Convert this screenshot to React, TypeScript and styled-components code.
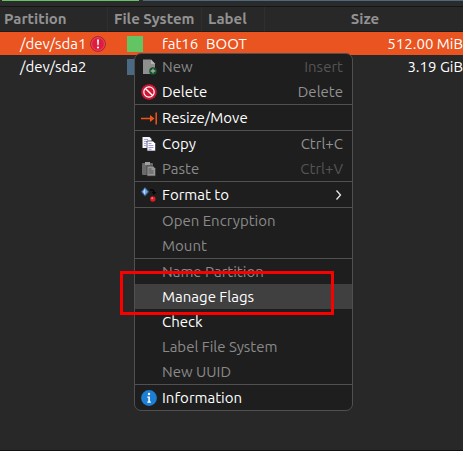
import React from "react";
import styled, { createGlobalStyle, css } from "styled-components";

const GlobalStyle = createGlobalStyle`
  * { box-sizing: border-box; }
  body {
    margin: 0;
    background: #282828;
    color: #fff;
    font: 15px/22px Ubuntu, "Noto Sans", "Open Sans", sans-serif;
  }
`;

const Window = styled.main`
  position: relative;
  display: flex;
  flex-direction: column;
  min-height: 100vh;
  overflow: hidden;
  border-bottom: 1px solid #151113;
`;

const DiskBar = styled.div`
  display: flex;
  gap: 4px;
  height: 7px;
  padding-left: 2px;
  background: #2b2b2b;
  border-bottom: 1px solid #161616;
`;

const DiskSegment = styled.div<{ $color: string; $grow?: boolean }>`
  flex: ${(p) => (p.$grow ? "1" : "0 0 137px")};
  height: 1px;
  background: ${(p) => p.$color};
`;

const Table = styled.table`
  width: 100%;
  table-layout: fixed;
  border-collapse: separate;
  border-spacing: 0;
`;

const Col = styled.col<{ $width?: number }>`
  width: ${(p) => (p.$width ? `${p.$width}px` : "auto")};
`;

const HeadCell = styled.th<{ $center?: boolean }>`
  height: 25px;
  padding: 0 0 0 ${(p) => (p.$center ? 2 : 6)}px;
  border-right: 1px solid #2f2f2f;
  border-bottom: 1px solid #1d1d1d;
  color: #929292;
  font-weight: 700;
  line-height: 24px;
  text-align: ${(p) => (p.$center ? "center" : "left")};
  white-space: nowrap;
  &:first-child { padding-left: 4px; }
  &:last-child { border-right: 0; }
`;

const Row = styled.tr<{ $selected?: boolean }>`
  background: ${(p) => (p.$selected ? "#e95420" : "transparent")};
`;

const Cell = styled.td<{ $indent?: number; $right?: boolean }>`
  height: 23px;
  padding: 0 0 0 ${(p) => p.$indent ?? 0}px;
  text-align: ${(p) => (p.$right ? "right" : "left")};
  white-space: nowrap;
`;

const CellContent = styled.div<{ $gap: number }>`
  display: flex;
  align-items: center;
  gap: ${(p) => p.$gap}px;
  svg { flex: none; }
`;

const Swatch = styled.span<{ $color: string }>`
  width: 16px;
  height: 16px;
  background: ${(p) => p.$color};
`;

const Menu = styled.div`
  position: absolute;
  top: 53px;
  left: 134px;
  width: 219px;
  overflow: hidden;
  background: #1e1e1e;
  border: 1px solid #505050;
  border-radius: 7px;
`;

const Separator = styled.hr`
  height: 1px;
  margin: 0;
  border: 0;
  background: #505050;
`;

const MenuItem = styled.button<{ $active?: boolean }>`
  display: grid;
  grid-template-columns: 16px 1fr auto;
  align-items: center;
  column-gap: 5px;
  width: 100%;
  height: 25px;
  padding: 0 9px 0 6px;
  border: 0;
  background: ${(p) => (p.$active ? "#404040" : "transparent")};
  color: #fff;
  font: inherit;
  text-align: left;
  white-space: nowrap;
  ${(p) => p.disabled && css`color: #8a8a8a;`}
`;

const Shortcut = styled.kbd<{ $dim?: boolean }>`
  color: ${(p) => (p.$dim ? "#555" : "#929292")};
  font: inherit;
`;

const Callout = styled.div`
  position: absolute;
  top: 271px;
  left: 120px;
  width: 214px;
  height: 44px;
  border: 3px solid #fb0000;
  pointer-events: none;
`;

const Icon = ({ children }: { children?: React.ReactNode }) => (
  <svg width="16" height="16" viewBox="0 0 16 16" aria-hidden="true">{children}</svg>
);

const WarningIcon = () => (
  <Icon>
    <circle cx="8" cy="8" r="7.4" fill="#df1c3f" stroke="#a02a30" strokeWidth="1" />
    <circle cx="8" cy="8" r="6.4" fill="none" stroke="#ee5468" strokeWidth=".8" />
    <path d="M7 3.5h2l-.4 5.7H7.4z" fill="#fff" />
    <circle cx="8" cy="11.5" r="1.1" fill="#fff" />
  </Icon>
);

const NewIcon = () => (
  <Icon>
    <path d="M2 .5h8l4 4V15H2z" fill="#8f8f8f" />
    <path d="M10 .5V5h4z" fill="#b5b5b5" />
    <circle cx="12" cy="12" r="3.8" fill="#17562a" />
    <path d="M12 9.7v4.6M9.7 12h4.6" stroke="#a3aaa4" strokeWidth="1.3" />
  </Icon>
);

const DeleteIcon = () => (
  <Icon>
    <circle cx="8" cy="8" r="7.8" fill="#cf1735" />
    <circle cx="8" cy="8" r="5.2" fill="none" stroke="#fff" strokeWidth="1.2" />
    <path d="M4.4 4.4l7.2 7.2" stroke="#fff" strokeWidth="1.4" />
  </Icon>
);

const ResizeIcon = () => (
  <Icon>
    <path d="M0 8.5h11M15.2 2.5v12" stroke="#f2541b" strokeWidth="1.5" />
    <path d="M9 5L13.5 8.5 9 12z" fill="#f2541b" />
  </Icon>
);

const CopyIcon = () => (
  <Icon>
    <path d="M1.5 1h7l2 2v9h-9z" fill="#f5f5fa" />
    <path d="M3 3.5h4M3 5.5h3M3 7.5h2M3 9.5h2" stroke="#aaa8e4" />
    <path d="M6 5h6l2.5 2.5V15H6z" fill="#fff" stroke="#292933" strokeWidth=".7" />
    <path d="M7.5 7.5h3M7.5 9.5h5M7.5 11.5h5M7.5 13.3h3" stroke="#9c9ae0" />
  </Icon>
);

const PasteIcon = () => (
  <Icon>
    <rect x="1" y="2" width="11" height="12" rx="1" fill="#6b6b6b" />
    <path d="M4 1h5v3H4z" fill="#a0a0a0" />
    <path d="M6 5h6l2.5 2.5V15H6z" fill="#969696" stroke="#373737" strokeWidth=".7" />
    <path d="M7.5 8h3M7.5 10h5M7.5 12h5" stroke="#55545f" />
  </Icon>
);

const FormatIcon = () => (
  <Icon>
    <path d="M4 0L8 4.7 4 9.5 0 4.7z" fill="#35659f" />
    <path d="M4 1.3L6.8 4.7 4 8.1 1.2 4.7z" fill="#76a3d8" />
    <path d="M4 1.3V8.1L2.2 4.7z" fill="#c2d9f2" />
    <path d="M9 3q4-1 4 3" fill="none" stroke="#050505" strokeWidth="1.5" />
    <path d="M10.5 5h5L13 8z" fill="#050505" />
    <circle cx="11.8" cy="12" r="2.7" fill="#d91e25" />
    <circle cx="11.2" cy="11.2" r="1" fill="#ff827d" />
  </Icon>
);

const InfoIcon = () => (
  <Icon>
    <circle cx="8" cy="8" r="7.9" fill="#1c7fd5" />
    <circle cx="8" cy="4" r="1.2" fill="#fff" />
    <path d="M6.3 6.5h2.6v5h1v1.2H6.3v-1.2h1V7.7h-1z" fill="#fff" />
  </Icon>
);

const Chevron = () => (
  <Icon>
    <path d="M9.5 3.5l4 4.5-4 4.5" fill="none" stroke="#e8e8e8" strokeWidth="1.3" />
  </Icon>
);

type Entry = {
  label: string;
  icon?: React.ReactNode;
  shortcut?: string;
  disabled?: boolean;
  active?: boolean;
  submenu?: boolean;
};

const groups: Entry[][] = [
  [
    { label: "New", icon: <NewIcon />, shortcut: "Insert", disabled: true },
    { label: "Delete", icon: <DeleteIcon />, shortcut: "Delete" },
  ],
  [{ label: "Resize/Move", icon: <ResizeIcon /> }],
  [
    { label: "Copy", icon: <CopyIcon />, shortcut: "Ctrl+C" },
    { label: "Paste", icon: <PasteIcon />, shortcut: "Ctrl+V", disabled: true },
  ],
  [{ label: "Format to", icon: <FormatIcon />, submenu: true }],
  [
    { label: "Open Encryption", disabled: true },
    { label: "Mount", disabled: true },
  ],
  [
    { label: "Name Partition", disabled: true },
    { label: "Manage Flags", active: true },
    { label: "Check" },
    { label: "Label File System", disabled: true },
    { label: "New UUID", disabled: true },
  ],
  [{ label: "Information", icon: <InfoIcon /> }],
];

export default function App() {
  return (
    <Window>
      <GlobalStyle />
      <DiskBar>
        <DiskSegment $color="#62c462" />
        <DiskSegment $color="#4b6983" $grow />
      </DiskBar>
      <Table>
        <colgroup>
          <Col $width={108} />
          <Col $width={94} />
          <Col $width={63} />
          <Col />
        </colgroup>
        <thead>
          <tr>
            <HeadCell scope="col">Partition</HeadCell>
            <HeadCell scope="col">File System</HeadCell>
            <HeadCell scope="col">Label</HeadCell>
            <HeadCell scope="col" $center>Size</HeadCell>
          </tr>
        </thead>
        <tbody>
          <Row $selected>
            <Cell $indent={20}>
              <CellContent $gap={4}>/dev/sda1<WarningIcon /></CellContent>
            </Cell>
            <Cell $indent={19}>
              <CellContent $gap={19}><Swatch $color="#62c462" />fat16</CellContent>
            </Cell>
            <Cell $indent={4}>BOOT</Cell>
            <Cell $right>512.00 MiB</Cell>
          </Row>
          <Row>
            <Cell $indent={20}>/dev/sda2</Cell>
            <Cell $indent={19}>
              <CellContent $gap={19}><Swatch $color="#4b6983" /></CellContent>
            </Cell>
            <Cell />
            <Cell $right>3.19 GiB</Cell>
          </Row>
        </tbody>
      </Table>
      <Menu role="menu">
        {groups.map((group, index) => (
          <React.Fragment key={group[0].label}>
            {index > 0 && <Separator />}
            {group.map((entry) => (
              <MenuItem
                key={entry.label}
                type="button"
                role="menuitem"
                disabled={entry.disabled}
                $active={entry.active}
                aria-haspopup={entry.submenu ? "menu" : undefined}
              >
                {entry.icon ?? <span />}
                <span>{entry.label}</span>
                {entry.shortcut && <Shortcut $dim={entry.disabled}>{entry.shortcut}</Shortcut>}
                {entry.submenu && <Chevron />}
              </MenuItem>
            ))}
          </React.Fragment>
        ))}
      </Menu>
      <Callout />
    </Window>
  );
}
